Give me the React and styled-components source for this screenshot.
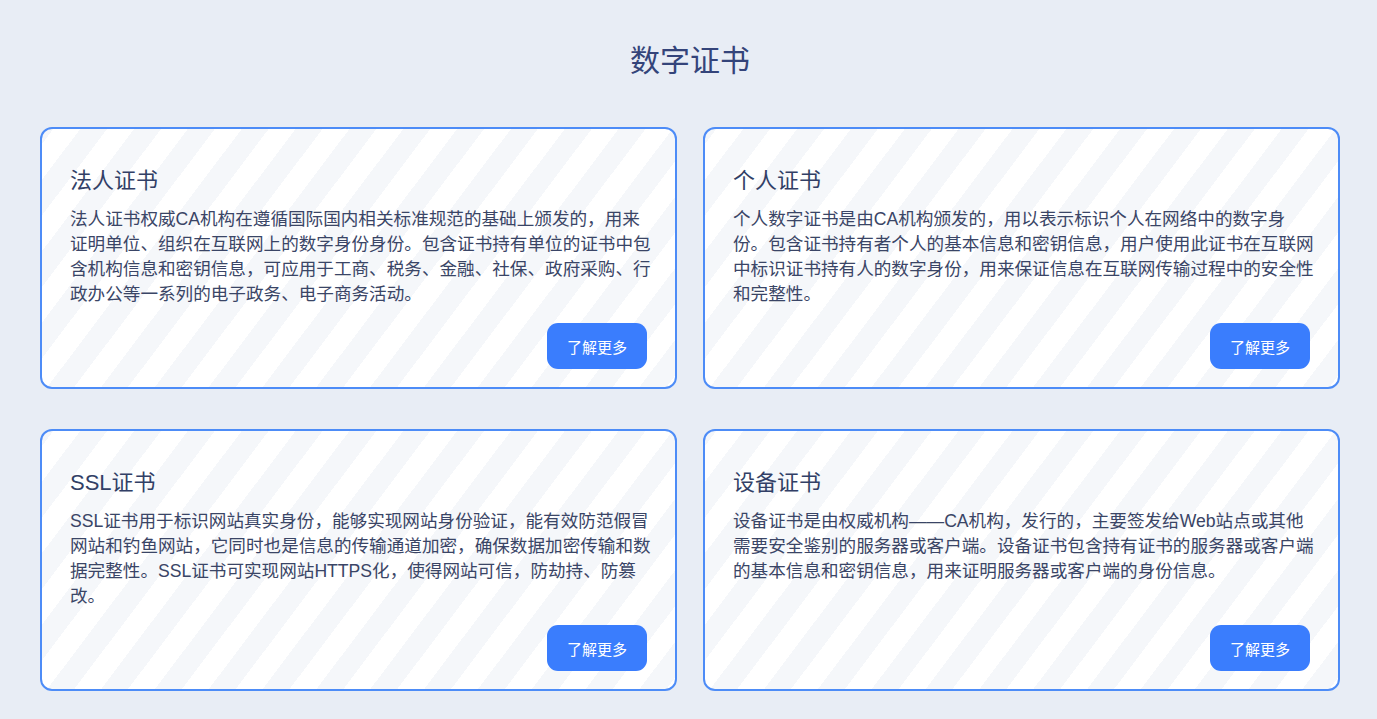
import React from "react";
import styled, { createGlobalStyle } from "styled-components";

const GlobalStyle = createGlobalStyle`
  html, body {
    margin: 0;
    padding: 0;
    background: #e8edf5;
  }
  body {
    font-family: "Liberation Sans", Arial, "Noto Sans CJK SC", sans-serif;
  }
  * { box-sizing: border-box; }
`;

const Page = styled.main`
  min-height: 719px;
  padding: 38px 37px 28px 40px;
  background: #e8edf5;
`;

const Heading = styled.h1`
  margin: 0 0 43px;
  font-size: 30px;
  line-height: 46px;
  font-weight: 400;
  text-align: center;
  color: #34447a;
`;

const Grid = styled.section`
  display: grid;
  grid-template-columns: 1fr 1fr;
  column-gap: 26px;
  row-gap: 40px;
`;

const Card = styled.article`
  height: 262px;
  display: flex;
  flex-direction: column;
  padding: 35px 28px 18px 28px;
  border: 2px solid #4d8cf7;
  border-radius: 12px;
  background: repeating-linear-gradient(
    127deg,
    #f5f7fa 0 9px,
    #ffffff 9px 30.5px,
    #f5f7fa 30.5px 43px
  );
`;

const Title = styled.h2`
  margin: 0 0 10px;
  font-size: 22px;
  line-height: 33px;
  font-weight: 400;
  color: #323f66;
`;

const Desc = styled.p`
  margin: 0 -8px 0 0;
  font-size: 17.6px;
  line-height: 25px;
  color: #3a4566;
`;

const Button = styled.button`
  margin-top: auto;
  align-self: flex-end;
  width: 100px;
  height: 46px;
  border: none;
  border-radius: 11px;
  background: #3a7dfd;
  color: #ffffff;
  font-family: inherit;
  font-size: 15px;
  cursor: pointer;
`;

const items = [
  {
    title: "法人证书",
    text: "法人证书权威CA机构在遵循国际国内相关标准规范的基础上颁发的，用来证明单位、组织在互联网上的数字身份身份。包含证书持有单位的证书中包含机构信息和密钥信息，可应用于工商、税务、金融、社保、政府采购、行政办公等一系列的电子政务、电子商务活动。",
  },
  {
    title: "个人证书",
    text: "个人数字证书是由CA机构颁发的，用以表示标识个人在网络中的数字身份。包含证书持有者个人的基本信息和密钥信息，用户使用此证书在互联网中标识证书持有人的数字身份，用来保证信息在互联网传输过程中的安全性和完整性。",
  },
  {
    title: "SSL证书",
    text: "SSL证书用于标识网站真实身份，能够实现网站身份验证，能有效防范假冒网站和钓鱼网站，它同时也是信息的传输通道加密，确保数据加密传输和数据完整性。SSL证书可实现网站HTTPS化，使得网站可信，防劫持、防篡改。",
  },
  {
    title: "设备证书",
    text: "设备证书是由权威机构——CA机构，发行的，主要签发给Web站点或其他需要安全鉴别的服务器或客户端。设备证书包含持有证书的服务器或客户端的基本信息和密钥信息，用来证明服务器或客户端的身份信息。",
  },
];

export default function App() {
  return (
    <>
      <GlobalStyle />
      <Page>
        <Heading>数字证书</Heading>
        <Grid>
          {items.map((it) => (
            <Card key={it.title}>
              <Title>{it.title}</Title>
              <Desc>{it.text}</Desc>
              <Button>了解更多</Button>
            </Card>
          ))}
        </Grid>
      </Page>
    </>
  );
}
